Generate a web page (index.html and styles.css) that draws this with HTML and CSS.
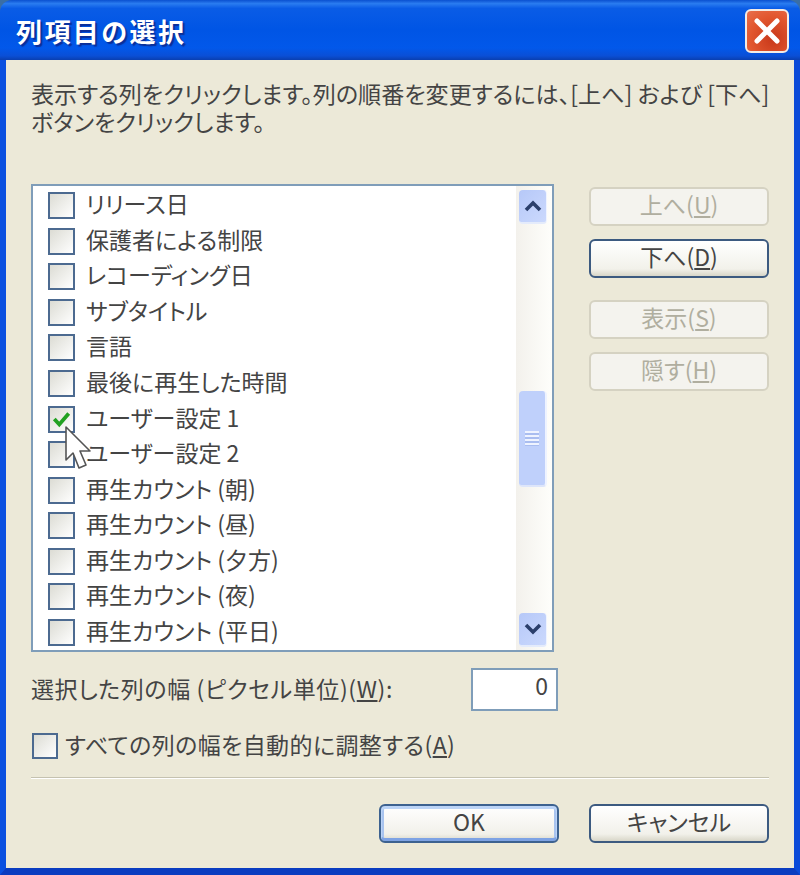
FILE: index.html
```html
<!DOCTYPE html>
<html lang="ja">
<head>
    <meta charset="UTF-8">
    <meta name="viewport" content="width=device-width, initial-scale=1.0">
    <title>列項目の選択</title>
    <link rel="stylesheet" href="styles.css">
</head>
<body>
    <div class="window">
        <div class="titlebar">
            <span class="title">列項目の選択</span>
            <div class="close">
                <svg width="26" height="26" viewBox="0 0 26 26"><path d="M3 3 L23 23 M23 3 L3 23" stroke="#fff" stroke-width="5" stroke-linecap="round"/></svg>
            </div>
        </div>
        <div class="client">
            <p class="intro">表示する列をクリックします。列の順番を変更するには、[上へ] および [下へ]<br>ボタンをクリックします。</p>
            <div class="main">
                <div class="listbox">
                    <ul class="items">
                        <li><span class="check"></span><span class="label">リリース日</span></li>
                        <li><span class="check"></span><span class="label">保護者による制限</span></li>
                        <li><span class="check"></span><span class="label">レコーディング日</span></li>
                        <li><span class="check"></span><span class="label">サブタイトル</span></li>
                        <li><span class="check"></span><span class="label">言語</span></li>
                        <li><span class="check"></span><span class="label">最後に再生した時間</span></li>
                        <li>
                            <span class="check">
                                <svg width="21" height="21" viewBox="0 0 19 19"><path d="M3 9 L7.5 14 L16 4" fill="none" stroke="#21a121" stroke-width="3.4"/></svg>
                            </span><span class="label">ユーザー設定 1</span>
                        </li>
                        <li><span class="check"></span><span class="label">ユーザー設定 2</span></li>
                        <li><span class="check"></span><span class="label">再生カウント (朝)</span></li>
                        <li><span class="check"></span><span class="label">再生カウント (昼)</span></li>
                        <li><span class="check"></span><span class="label">再生カウント (夕方)</span></li>
                        <li><span class="check"></span><span class="label">再生カウント (夜)</span></li>
                        <li><span class="check"></span><span class="label">再生カウント (平日)</span></li>
                    </ul>
                    <div class="scrollbar">
                        <div class="arrow">
                            <svg width="20" height="14" viewBox="0 0 20 14"><path d="M3 11 L10 4 L17 11" fill="none" stroke="#2b3f6b" stroke-width="3.6"/></svg>
                        </div>
                        <div class="track">
                            <div class="thumb"><span class="grip"></span></div>
                        </div>
                        <div class="arrow">
                            <svg width="20" height="14" viewBox="0 0 20 14"><path d="M3 3 L10 10 L17 3" fill="none" stroke="#2b3f6b" stroke-width="3.6"/></svg>
                        </div>
                    </div>
                </div>
                <div class="side">
                    <button class="btn" disabled>上へ(<u>U</u>)</button>
                    <button class="btn">下へ(<u>D</u>)</button>
                    <button class="btn gap" disabled>表示(<u>S</u>)</button>
                    <button class="btn" disabled>隠す(<u>H</u>)</button>
                </div>
            </div>
            <div class="width-row">
                <label>選択した列の幅 (ピクセル単位)(<u>W</u>):</label>
                <div class="field">0</div>
            </div>
            <div class="auto-row">
                <span class="check"></span><span class="label">すべての列の幅を自動的に調整する(<u>A</u>)</span>
            </div>
            <div class="separator"></div>
            <div class="footer">
                <button class="btn default">OK</button>
                <button class="btn">キャンセル</button>
            </div>
        </div>
        <svg class="cursor" width="30" height="46" viewBox="0 0 30 46">
            <path d="M1 1 L1 34 L8 27 L14 42 L21 39 L15 25 L25 25 Z" fill="#fff" stroke="#555" stroke-width="1.6" stroke-linejoin="round"/>
        </svg>
    </div>
</body>
</html>
```

FILE: styles.css
```css
html, body {
    margin: 0;
    padding: 0;
}

body {
    background-color: #3a6ea5;
    font-family: "Noto Sans CJK JP", "Noto Sans", sans-serif;
    font-size: 23px;
    font-feature-settings: "palt";
    color: #444;
    overflow: hidden;
}

.window {
    position: relative;
    width: 800px;
    height: 875px;
    display: flex;
    flex-direction: column;
    border-radius: 12px 12px 0 0;
    overflow: hidden;
}

.titlebar {
    height: 60px;
    flex-shrink: 0;
    display: flex;
    align-items: center;
    justify-content: space-between;
    padding: 2px 11px 0 16px;
    box-sizing: border-box;
    background: linear-gradient(to bottom, #0a50d0 0%, #2a7cf0 6%, #0a5ce6 14%, #0055e5 50%, #0258ea 80%, #0a4fd6 93%, #0a3fb0 100%);
}

.title {
    font-size: 26px;
    font-weight: bold;
    font-feature-settings: normal;
    letter-spacing: 2.4px;
    color: #fff;
    text-shadow: 2px 2px 1px #0a2f9a;
    line-height: 1;
}

.close {
    width: 44px;
    height: 44px;
    box-sizing: border-box;
    display: flex;
    align-items: center;
    justify-content: center;
    border: 2px solid #f4ece6;
    border-radius: 6px;
    background: radial-gradient(circle at 65% 70%, #c8381a, #e2572f 60%, #e8704e);
}

.client {
    flex: 1;
    background-color: #ece9d8;
    border-left: 6px solid #0a50e0;
    border-right: 6px solid #0a4ad8;
    border-bottom: 7px solid #0a3cc0;
    padding: 0 25px;
    display: flex;
    flex-direction: column;
}

.intro {
    margin: 19px 0 0;
    font-size: 23.1px;
    line-height: 28px;
    white-space: nowrap;
    height: 105px;
}

.main {
    display: flex;
    justify-content: space-between;
    align-items: flex-start;
}

.listbox {
    width: 523px;
    height: 468px;
    box-sizing: border-box;
    background-color: #fff;
    border: 2px solid #7f9db9;
    display: flex;
    overflow: hidden;
}

.items {
    list-style: none;
    margin: 0;
    padding: 2px 0 0 15px;
    flex: 1;
}

.items li {
    height: 35.55px;
    display: flex;
    align-items: center;
    white-space: nowrap;
}

.label {
    line-height: 1;
    margin-bottom: 4px;
}

.check {
    width: 27px;
    height: 27px;
    box-sizing: border-box;
    flex-shrink: 0;
    margin-right: 11px;
    border: 2px solid #4c6a90;
    background: linear-gradient(135deg, #dcdcd4, #ffffff);
    display: flex;
    align-items: center;
    justify-content: center;
}

.scrollbar {
    width: 36px;
    box-sizing: border-box;
    padding: 4px 5px 3px 3px;
    display: flex;
    flex-direction: column;
    background: linear-gradient(to right, #f3f1ec, #fefefb);
}

.arrow {
    height: 34px;
    flex-shrink: 0;
    display: flex;
    align-items: center;
    justify-content: center;
    border-radius: 4px;
    background: linear-gradient(135deg, #b6c8f8, #cbd9fd);
    border-right: 1px solid #eef3ff;
    border-bottom: 2px solid #e4ebfb;
    box-sizing: border-box;
}

.track {
    flex: 1;
    padding-top: 167px;
}

.thumb {
    height: 96px;
    box-sizing: border-box;
    border-radius: 4px;
    background-color: #bfd0fb;
    border-right: 2px solid #eef3ff;
    border-bottom: 2px solid #dde5fa;
    display: flex;
    align-items: center;
    justify-content: center;
}

.grip {
    width: 14px;
    height: 15px;
    background: repeating-linear-gradient(to bottom, #eef3ff 0, #eef3ff 2px, #a9bdf0 2px, #a9bdf0 4px);
}

.side {
    width: 180px;
    padding-top: 3px;
    display: flex;
    flex-direction: column;
    gap: 13px;
}

.btn {
    height: 39px;
    width: 180px;
    box-sizing: border-box;
    padding: 0 0 4px;
    font-family: inherit;
    font-feature-settings: inherit;
    font-size: 23px;
    line-height: 1;
    color: #444;
    border: 2px solid #3c5a80;
    border-radius: 6px;
    background: linear-gradient(to bottom, #ffffff, #f2f1ea 80%, #d8d6c8);
}

.btn:disabled {
    color: #b0ae9f;
    border-color: #d5d2c2;
    background: #f4f3ee;
}

.btn.gap {
    margin-top: 9px;
}

.btn.default {
    box-shadow: inset 0 2px 0 1px #bcd4f7, inset 0 -3px 0 0 #7ea3e4, inset 3px 0 0 #a9c4ef, inset -3px 0 0 #a9c4ef;
    border-color: #3d6290;
}

.width-row {
    display: flex;
    align-items: center;
    justify-content: space-between;
    width: 527px;
    margin-top: 16px;
    height: 43px;
}

.width-row label {
    margin-bottom: 3px;
    letter-spacing: 0.6px;
}

.field {
    width: 87px;
    height: 43px;
    box-sizing: border-box;
    background-color: #fff;
    border: 2px solid #7f9db9;
    padding: 0 8px;
    text-align: right;
    line-height: 30px;
}

.auto-row {
    display: flex;
    align-items: center;
    margin-top: 22px;
    height: 26px;
    padding-left: 1px;
    white-space: nowrap;
    letter-spacing: 0.4px;
}

.auto-row .check {
    width: 26px;
    height: 26px;
    margin-right: 7px;
}

.separator {
    margin-top: 18px;
    height: 1px;
    background-color: #c5c2b0;
    border-bottom: 1px solid #fff;
}

.footer {
    display: flex;
    justify-content: flex-end;
    gap: 30px;
    margin-top: 25px;
}

/* mouse pointer sits on top of the list */
.cursor {
    position: absolute;
    left: 65px;
    top: 426px;
}
```
